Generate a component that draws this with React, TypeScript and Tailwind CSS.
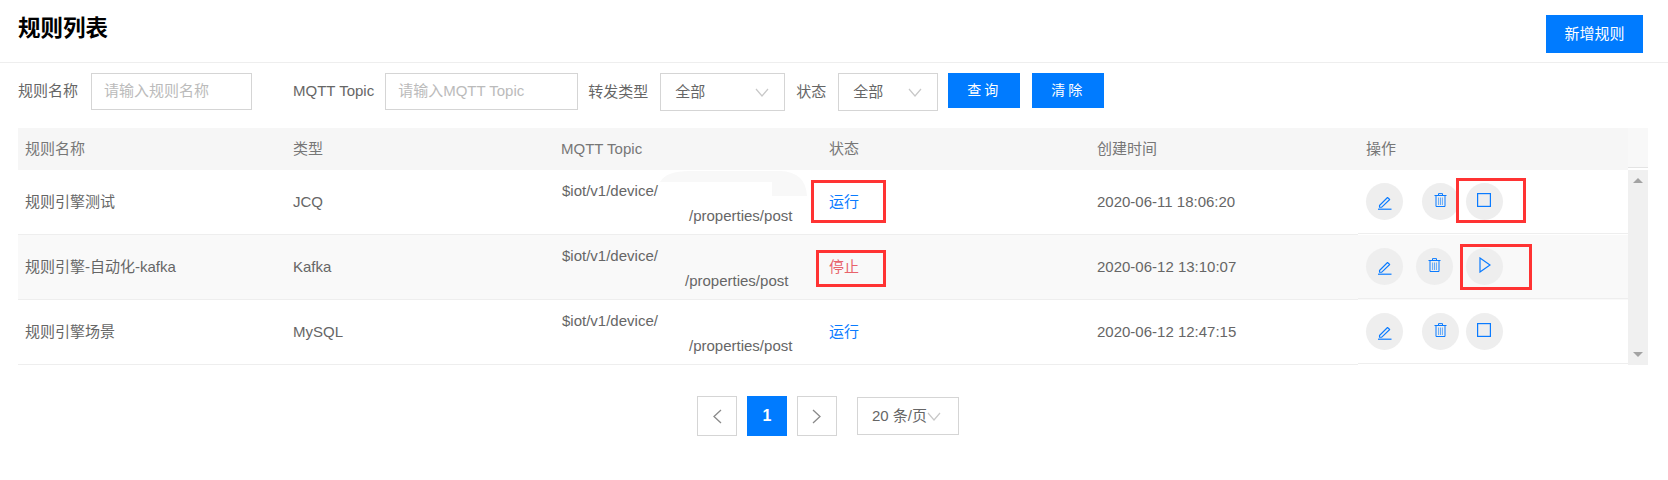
import React from "react";

const FONT = "font-['Liberation_Sans','Noto_Sans_CJK_SC',sans-serif]";

function Chevron({ className = "" }: { className?: string }) {
  return (
    <svg width="14" height="9" viewBox="0 0 14 9" fill="none" className={className}>
      <path d="M1 1l6 7 6-7" stroke="#c8c8c8" strokeWidth="1.2" />
    </svg>
  );
}

function Field({ label, placeholder, width, gap }: { label: string; placeholder: string; width: string; gap: string }) {
  return (
    <div className={`flex items-center ${gap}`}>
      <span className="text-[15px] text-[#666]">{label}</span>
      <div className={`h-[37px] ${width} border border-[#d5d5d5] flex items-center pl-[12px] text-[15px] text-[#bbb]`}>{placeholder}</div>
    </div>
  );
}

function Select({ width, value }: { width: string; value: string }) {
  return (
    <div className={`h-[38px] ${width} border border-[#d5d5d5] flex items-center justify-between pl-[14px] pr-[15px] text-[15px] text-[#666]`}>
      <span>{value}</span>
      <Chevron />
    </div>
  );
}

function Circle({ children, className = "" }: { children: React.ReactNode; className?: string }) {
  return <div className={`w-[37px] h-[37px] rounded-full bg-[#eeeeee] flex items-center justify-center shrink-0 ${className}`}>{children}</div>;
}

function EditIcon() {
  return (
    <svg width="16" height="16" viewBox="0 0 16 16" fill="none" stroke="#0a7bff" strokeWidth="1.1">
      <path d="M2.5 11.5L10.5 3.5l2.2 2L4.8 13.2H2.5z" strokeLinejoin="round" />
      <path d="M1 15.2h13.5" strokeWidth="1.2" />
    </svg>
  );
}

function TrashIcon() {
  return (
    <svg width="13" height="14" viewBox="0 0 13 14" fill="none" stroke="#0a7bff" strokeWidth="1" className="mb-[3px]">
      <path d="M0.5 2.5h12M4.5 2.5V0.6h4v1.9M2 2.5v11h9v-11" />
      <path d="M4.6 4.5v7.5M6.5 4.5v7.5M8.4 4.5v7.5" strokeOpacity="0.6" />
    </svg>
  );
}

function StopIcon() {
  return (
    <svg width="14" height="14" viewBox="0 0 14 14" fill="none" stroke="#0a7bff" strokeWidth="1.2" className="mb-[4px] mr-[2px]">
      <rect x="0.6" y="0.6" width="12.8" height="12.8" />
    </svg>
  );
}

function PlayIcon() {
  return (
    <svg width="12" height="16" viewBox="0 0 12 16" fill="none" stroke="#0a7bff" strokeWidth="1.2" className="mb-[4px]">
      <path d="M1 1v14l10-7z" strokeLinejoin="miter" />
    </svg>
  );
}

type Row = {
  name: string;
  type: string;
  indent: string;
  status: string;
  statusClass: string;
  time: string;
  bg: string;
  deleteGap: string;
  actionGap: string;
  action: React.ReactNode;
};

const rows: Row[] = [
  { name: "规则引擎测试", type: "JCQ", indent: "pl-[127px]", status: "运行", statusClass: "text-[#0a7bff]", time: "2020-06-11 18:06:20", bg: "", deleteGap: "ml-[19px]", actionGap: "ml-[7px]", action: <StopIcon /> },
  { name: "规则引擎-自动化-kafka", type: "Kafka", indent: "pl-[123px]", status: "停止", statusClass: "text-[#e8636b]", time: "2020-06-12 13:10:07", bg: "bg-[#f9f9f9]", deleteGap: "ml-[13px]", actionGap: "ml-[13px]", action: <PlayIcon /> },
  { name: "规则引擎场景", type: "MySQL", indent: "pl-[127px]", status: "运行", statusClass: "text-[#0a7bff]", time: "2020-06-12 12:47:15", bg: "", deleteGap: "ml-[19px]", actionGap: "ml-[7px]", action: <StopIcon /> },
];

const cols = "grid grid-cols-[268px_268px_268px_268px_268px_270px]";

export default function App() {
  return (
    <div className={`${FONT} w-[1668px] h-[480px] bg-white relative overflow-hidden`}>
      <div className="h-[63px] border-b border-[#eeeeee] flex items-start justify-between pl-[18px] pr-[25px]">
        <h1 className="text-[22.5px] leading-[30px] font-bold text-black mt-[14px]">规则列表</h1>
        <button className="mt-[15px] w-[97px] h-[38px] bg-[#007bff] text-white text-[15px]">新增规则</button>
      </div>

      <div className="flex items-start pl-[18px] mt-[10px]">
        <Field label="规则名称" placeholder="请输入规则名称" width="w-[161px]" gap="gap-[13px]" />
        <div className="ml-[41px]">
          <Field label="MQTT Topic" placeholder="请输入MQTT Topic" width="w-[193px]" gap="gap-[11px]" />
        </div>
        <div className="flex items-center gap-[12px] ml-[10px]">
          <span className="text-[15px] text-[#666]">转发类型</span>
          <Select width="w-[125px]" value="全部" />
        </div>
        <div className="flex items-center gap-[12px] ml-[11px]">
          <span className="text-[15px] text-[#666]">状态</span>
          <Select width="w-[100px]" value="全部" />
        </div>
        <button className="ml-[10px] w-[72px] h-[35px] bg-[#007bff] text-white text-[14px] tracking-[3px]">查询</button>
        <button className="ml-[12px] w-[72px] h-[35px] bg-[#007bff] text-white text-[14px] tracking-[3px]">清除</button>
      </div>

      <div className="ml-[18px] mt-[17px] w-[1630px] relative">
        <div className="flex h-[42px]">
          <div className={`${cols} w-[1610px] bg-[#f6f6f6] items-center text-[15px] text-[#777]`}>
            {["规则名称", "类型", "MQTT Topic", "状态", "创建时间", "操作"].map((h, i) => (
              <div key={h} className={i === 5 ? "pl-[8px]" : "pl-[7px]"}>{h}</div>
            ))}
          </div>
          <div className="w-[20px] bg-[#f8f8f8] border-b border-[#e4e4e4] h-[40px]" />
        </div>

        <div className="flex">
          <div className="w-[1610px]">
            {rows.map((r) => (
              <div key={r.name} className={`${cols} h-[65px] text-[15px] text-[#666] ${r.bg}`}>
                <div className="pl-[7px] flex items-center border-b border-[#eeeeee]">{r.name}</div>
                <div className="pl-[7px] flex items-center border-b border-[#eeeeee]">{r.type}</div>
                <div className="pl-[8px] pt-[8px] border-b border-[#eeeeee] leading-[25px] whitespace-nowrap">
                  <div>$iot/v1/device/</div>
                  <div className={r.indent}>/properties/post</div>
                </div>
                <div className={`pl-[7px] flex items-center border-b border-[#eeeeee] ${r.statusClass}`}>{r.status}</div>
                <div className="pl-[7px] flex items-center border-b border-[#eeeeee]">{r.time}</div>
                <div className="h-[64px] pl-[8px] flex items-center border-b border-[#eeeeee]">
                  <Circle><EditIcon /></Circle>
                  <Circle className={r.deleteGap}><TrashIcon /></Circle>
                  <Circle className={r.actionGap}>{r.action}</Circle>
                </div>
              </div>
            ))}
          </div>
          <div className="w-[20px] bg-[#f0f0f0] flex flex-col items-center justify-between py-[8px]">
            <div className="w-0 h-0 border-x-[5px] border-x-transparent border-b-[5px] border-b-[#a3a3a3]" />
            <div className="w-0 h-0 border-x-[5px] border-x-transparent border-t-[5px] border-t-[#a3a3a3]" />
          </div>
        </div>
      </div>

      <div className="flex items-center ml-[697px] mt-[31px]">
        <div className="w-[40px] h-[40px] border border-[#d5d5d5] flex items-center justify-center">
          <svg width="10" height="15" viewBox="0 0 10 15" fill="none"><path d="M9 1L2 7.5 9 14" stroke="#8a8a8a" strokeWidth="1.3" /></svg>
        </div>
        <div className="ml-[10px] w-[40px] h-[40px] bg-[#007bff] text-white font-bold text-[16px] flex items-center justify-center">1</div>
        <div className="ml-[10px] w-[40px] h-[40px] border border-[#d5d5d5] flex items-center justify-center">
          <svg width="10" height="15" viewBox="0 0 10 15" fill="none"><path d="M1 1l7 6.5L1 14" stroke="#8a8a8a" strokeWidth="1.3" /></svg>
        </div>
        <div className="ml-[20px] w-[102px] h-[38px] border border-[#d5d5d5] flex items-center pl-[14px] text-[15px] text-[#666] whitespace-nowrap">
          <span>20 条/页</span>
          <Chevron />
        </div>
      </div>

      {/* faint redaction smear left on the screenshot */}
      <svg className="absolute left-[660px] top-[170px]" width="148" height="27" viewBox="0 0 148 27">
        <path d="M0 12Q6 1 30 1H120Q146 2 147 26H112V12Z" fill="#f8f8f8" />
      </svg>

      {/* annotation boxes drawn over the screenshot */}
      <div className="absolute left-[811px] top-[180px] w-[75px] h-[43px] border-[3px] border-[#ff3333]" />
      <div className="absolute left-[816px] top-[250px] w-[70px] h-[37px] border-[3px] border-[#ff3333]" />
      <div className="absolute left-[1456px] top-[178px] w-[70px] h-[45px] border-[3px] border-[#ff3333]" />
      <div className="absolute left-[1460px] top-[244px] w-[72px] h-[46px] border-[3px] border-[#ff3333]" />
    </div>
  );
}
